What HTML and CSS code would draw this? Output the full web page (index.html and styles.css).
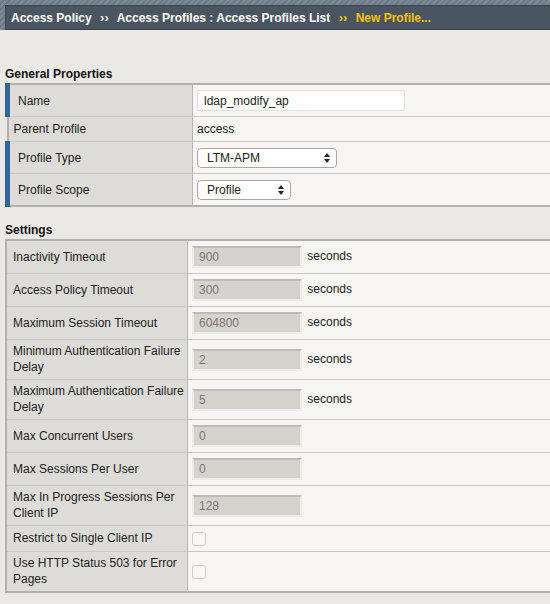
FILE: index.html
```html
<!DOCTYPE html>
<html lang="en">
<head>
  <meta charset="UTF-8">
  <title>New Profile</title>
  <link rel="stylesheet" href="styles.css">
</head>
<body>
  <div class="topstripe">
    <div class="crumbs">
      <span>Access Policy</span>
      <span class="sep">&rsaquo;&rsaquo;</span>
      <span>Access Profiles : Access Profiles List</span>
      <span class="sep current">&rsaquo;&rsaquo;</span>
      <span class="current">New Profile...</span>
    </div>
  </div>

  <div class="content">
    <h2>General Properties</h2>
    <table class="props general">
      <tr class="tall">
        <td class="label req">Name</td>
        <td class="value"><input type="text" class="name-input" value="ldap_modify_ap"></td>
      </tr>
      <tr class="short">
        <td class="label">Parent Profile</td>
        <td class="value">access</td>
      </tr>
      <tr class="tall">
        <td class="label req">Profile Type</td>
        <td class="value"><div class="select wide">LTM-APM<span class="arrows"></span></div></td>
      </tr>
      <tr class="tall">
        <td class="label req">Profile Scope</td>
        <td class="value"><div class="select narrow">Profile<span class="arrows"></span></div></td>
      </tr>
    </table>

    <h2>Settings</h2>
    <table class="props settings">
      <tr>
        <td class="label">Inactivity Timeout</td>
        <td class="value"><input type="text" class="num" value="900" disabled> seconds</td>
      </tr>
      <tr>
        <td class="label">Access Policy Timeout</td>
        <td class="value"><input type="text" class="num" value="300" disabled> seconds</td>
      </tr>
      <tr>
        <td class="label">Maximum Session Timeout</td>
        <td class="value"><input type="text" class="num" value="604800" disabled> seconds</td>
      </tr>
      <tr>
        <td class="label">Minimum Authentication Failure Delay</td>
        <td class="value"><input type="text" class="num" value="2" disabled> seconds</td>
      </tr>
      <tr>
        <td class="label">Maximum Authentication Failure Delay</td>
        <td class="value"><input type="text" class="num" value="5" disabled> seconds</td>
      </tr>
      <tr>
        <td class="label">Max Concurrent Users</td>
        <td class="value"><input type="text" class="num" value="0" disabled></td>
      </tr>
      <tr>
        <td class="label">Max Sessions Per User</td>
        <td class="value"><input type="text" class="num" value="0" disabled></td>
      </tr>
      <tr>
        <td class="label">Max In Progress Sessions Per Client IP</td>
        <td class="value"><input type="text" class="num" value="128" disabled></td>
      </tr>
      <tr class="check-row">
        <td class="label">Restrict to Single Client IP</td>
        <td class="value"><span class="check"></span></td>
      </tr>
      <tr>
        <td class="label">Use HTTP Status 503 for Error Pages</td>
        <td class="value"><span class="check"></span></td>
      </tr>
    </table>
  </div>
</body>
</html>
```

FILE: styles.css
```css
html, body {
  margin: 0;
  padding: 0;
  background: #ebe9e5;
  font-family: "Liberation Sans", Arial, sans-serif;
  font-size: 12px;
  color: #222;
}
.topstripe {
  background: repeating-linear-gradient(135deg, #7b8896 0 2px, #6d7a88 2px 4px);
  padding: 5px 0 0 5px;
}
.crumbs {
  background: #4b5561;
  border: 1px solid #3a424c;
  border-right: none;
  height: 23px;
  line-height: 23px;
  padding-left: 5px;
  color: #fff;
  font-weight: bold;
  font-size: 12px;
  white-space: nowrap;
}
.crumbs .sep {
  margin: 0 5px;
  font-size: 13px;
}
.crumbs .current {
  color: #f5c400;
}
.content {
  padding: 37px 0 13px 5px;
}
h2 {
  font-size: 12px;
  font-weight: bold;
  margin: 0 0 2px 0;
  color: #111;
}
.props {
  width: 100%;
  border-collapse: collapse;
  border: 2px solid #b3b1ad;
  border-right: none;
  margin-bottom: 16px;
}
.props td {
  border-top: 1px solid #c9c7c3;
  padding: 0;
}
.props .label {
  background: #dedcd8;
  padding-left: 5px;
  border-right: 1px solid #b9b7b3;
  vertical-align: middle;
}
.general .label {
  width: 174px;
}
.props .label.req {
  border-left: 5px solid #2f669c;
  padding-left: 8px;
}
.props .value {
  background: #f7f6f4;
  padding-left: 4px;
  vertical-align: middle;
}
.props tr.tall td {
  height: 31px;
}
.props tr.short td {
  height: 24px;
}
.name-input {
  width: 208px;
  height: 21px;
  box-sizing: border-box;
  border: 1px solid #e2e0dc;
  background: #fff;
  font: 12px "Liberation Sans", Arial, sans-serif;
  color: #222;
  padding: 0 6px;
  margin: 0;
}
.select {
  position: relative;
  display: inline-block;
  height: 20px;
  line-height: 18px;
  box-sizing: border-box;
  border: 1px solid #a9a7a3;
  border-radius: 4px;
  background: #fff;
  padding-left: 9px;
  vertical-align: middle;
}
.select.wide { width: 140px; }
.select.narrow { width: 94px; }
.select .arrows {
  position: absolute;
  right: 6px;
  top: 4px;
  width: 0;
  height: 0;
  border-left: 3px solid transparent;
  border-right: 3px solid transparent;
  border-bottom: 4px solid #222;
}
.select .arrows::after {
  content: "";
  position: absolute;
  left: -3px;
  top: 6px;
  border-left: 3px solid transparent;
  border-right: 3px solid transparent;
  border-top: 4px solid #222;
}
.settings .label {
  width: 174px;
  padding: 3px 0 4px 6px;
  line-height: 16px;
}
.settings td {
  height: 25px;
}
.num {
  width: 110px;
  height: 22px;
  box-sizing: border-box;
  border: 2px solid #ecebe8;
  border-top-color: #bdbbb7;
  background: #d6d3ce;
  color: #7a7874;
  font: 12px "Liberation Sans", Arial, sans-serif;
  padding: 0 5px;
  margin: 0 2px 0 0;
  vertical-align: middle;
}
.check {
  display: inline-block;
  width: 12px;
  height: 12px;
  border: 1px solid #d0cecb;
  border-radius: 3px;
  background: #f9f8f6;
  vertical-align: middle;
}
.settings tr.check-row td {
  height: 18px;
}
```
